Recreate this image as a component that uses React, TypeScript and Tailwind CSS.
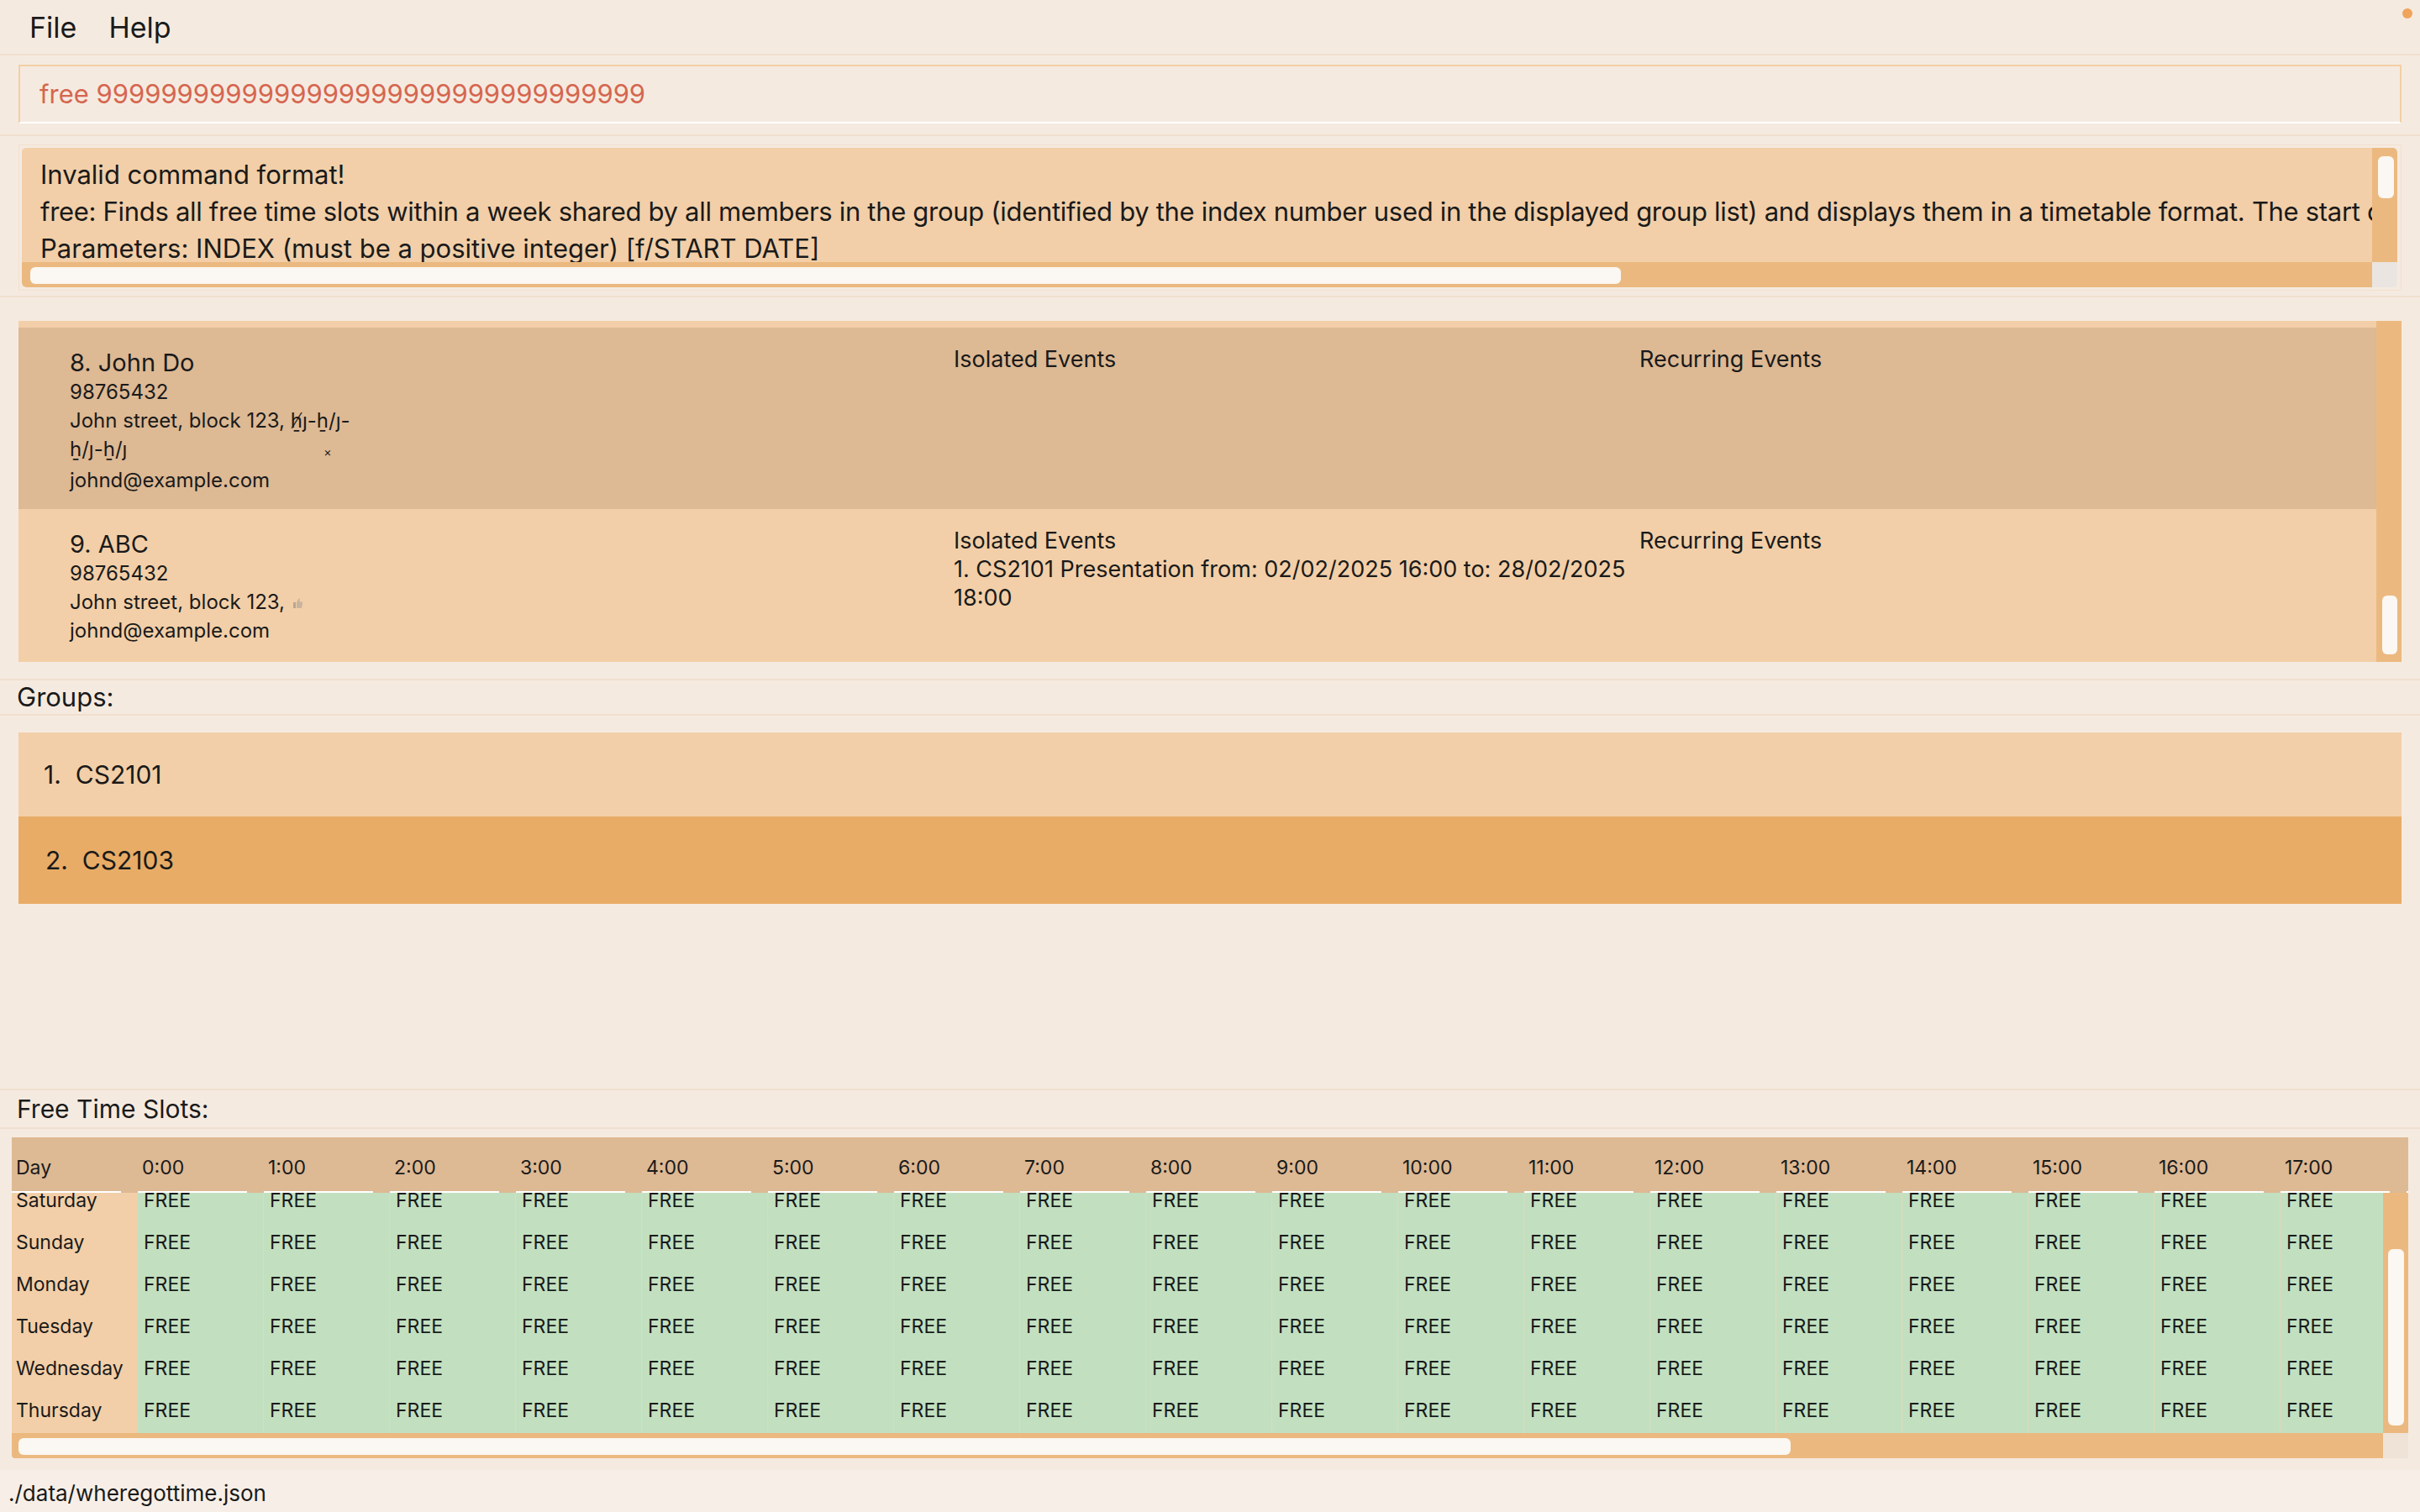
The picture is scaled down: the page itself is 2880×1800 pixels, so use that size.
import React from "react";

const hours = Array.from({ length: 19 }, (_, i) => `${i}:00`);
const days = ["Saturday", "Sunday", "Monday", "Tuesday", "Wednesday", "Thursday", "Friday"];

function Thumb() {
  return (
    <svg width="13" height="14" viewBox="0 0 13 14" className="inline-block align-baseline ml-[2px]">
      <rect x="1" y="6" width="3" height="7" fill="#b9a58f" />
      <path d="M5 6 L7.5 1.5 Q9 1 9 3 L8.5 5.5 L11.5 5.5 Q12.5 6 12 7.5 L11 12.5 Q10.5 13 9.5 13 L5 13 Z" fill="#c8b49e" />
    </svg>
  );
}

export default function App() {
  return (
    <div className="w-[2880px] h-[1800px] overflow-hidden bg-[#F5EAE0] text-[#1a1a1a] flex flex-col font-[family-name:Inter,sans-serif]">
      {/* Menu bar */}
      <div className="h-[64px] shrink-0 relative flex items-center pl-[35px] gap-[38px] text-[34px]">
        <span>File</span>
        <span>Help</span>
        <span className="absolute right-[9px] top-[10px] w-[12px] h-[12px] rounded-full bg-[#F0A45C]" />
      </div>

      {/* Command box */}
      <div className="h-[96px] shrink-0 border-t-[2px] border-[#F0DFCE] px-[22px] pt-[11px]">
        <div className="h-[70px] border-x-2 border-t-2 border-[#F2CFA5] border-b-2 border-b-white flex items-center pl-[23px] text-[31px] text-[#D5664F] whitespace-nowrap">
          free 9999999999999999999999999999999999
        </div>
      </div>

      {/* Result display */}
      <div className="h-[192px] shrink-0 border-t-[2px] border-[#F0DFCE] px-[22px] pt-[10px]">
        <div className="h-[174px] border border-[#F1E0CF] pl-[3px] pr-[4px] py-[3px]">
          <div className="h-full flex flex-col rounded-[5px] overflow-hidden">
            <div className="flex-1 flex min-h-0">
              <div className="flex-1 min-w-0 bg-[#F2CFA8] pl-[22px] pt-[10px] text-[31px] leading-[44px] whitespace-nowrap overflow-hidden">
                <div>Invalid command format!</div>
                <div className="tracking-[-0.01em]">
                  free: Finds all free time slots within a week shared by all members in the group (identified by the index number used in the displayed group list) and displays them in a timetable format. The start date is optional and defaults to today.
                </div>
                <div>Parameters: INDEX (must be a positive integer) [f/START DATE]</div>
                <div>Example: free 1 f/2025-03-01</div>
              </div>
              <div className="w-[30px] shrink-0 bg-[#EBB97F] relative rounded-tr-[5px]">
                <div className="absolute left-[7px] top-[10px] w-[19px] h-[50px] rounded-[6px] bg-[#FBF7F2]" />
              </div>
            </div>
            <div className="h-[30px] shrink-0 flex">
              <div className="flex-1 bg-[#EBB97F] relative rounded-bl-[5px]">
                <div className="absolute left-[10px] top-[6px] w-[1893px] h-[20px] rounded-[6px] bg-[#FBF7F2]" />
              </div>
              <div className="w-[30px] shrink-0 bg-[#EAE5E0]" />
            </div>
          </div>
        </div>
      </div>

      {/* Person list */}
      <div className="h-[456px] shrink-0 border-t-[2px] border-[#F0DFCE] px-[22px] pt-[28px]">
        <div className="h-[406px] flex bg-[#F2CFA8]">
          <div className="flex-1 min-w-0 pt-[8px] overflow-hidden">
            {/* Card 1 */}
            <div className="h-[216px] bg-[#DDB994] flex pl-[61px]">
              <div className="w-[1052px] shrink-0 pt-[24px]">
                <div className="text-[29px] leading-[36px]">8. John Do</div>
                <div className="text-[24px] leading-[34px]">98765432</div>
                <div className="text-[24px] leading-[34px] whitespace-nowrap">John street, block 123, ẖ̸ȷ-ẖ/ȷ-</div>
                <div className="text-[24px] leading-[34px] whitespace-nowrap">
                  ẖ/ȷ-ẖ/ȷ<span className="inline-block ml-[234px] text-[14px]">×</span>
                </div>
                <div className="text-[24px] leading-[34px]">johnd@example.com</div>
              </div>
              <div className="w-[816px] shrink-0 pt-[21px] text-[27px] leading-[34px]">Isolated Events</div>
              <div className="flex-1 pt-[21px] text-[27px] leading-[34px]">Recurring Events</div>
            </div>
            {/* Card 2 */}
            <div className="h-[182px] bg-[#F2CFA8] flex pl-[61px]">
              <div className="w-[1052px] shrink-0 pt-[24px]">
                <div className="text-[29px] leading-[36px]">9. ABC</div>
                <div className="text-[24px] leading-[34px]">98765432</div>
                <div className="text-[24px] leading-[34px] whitespace-nowrap">
                  John street, block 123, <Thumb />
                </div>
                <div className="text-[24px] leading-[34px]">johnd@example.com</div>
              </div>
              <div className="w-[816px] shrink-0 pt-[21px] text-[27px] leading-[34px]">
                <div>Isolated Events</div>
                <div className="whitespace-nowrap">1. CS2101 Presentation from: 02/02/2025 16:00 to: 28/02/2025</div>
                <div>18:00</div>
              </div>
              <div className="flex-1 pt-[21px] text-[27px] leading-[34px]">Recurring Events</div>
            </div>
          </div>
          <div className="w-[30px] shrink-0 bg-[#EBB97F] relative">
            <div className="absolute left-[7px] top-[327px] w-[18px] h-[70px] rounded-[6px] bg-[#FBF7F2]" />
          </div>
        </div>
      </div>

      {/* Groups label */}
      <div className="h-[42px] shrink-0 border-t-[2px] border-[#F0DFCE] flex items-center pl-[20px] text-[31px]">
        Groups:
      </div>

      {/* Groups list */}
      <div className="h-[446px] shrink-0 border-t-[2px] border-[#F0DFCE] px-[22px] pt-[20px]">
        <div className="h-[100px] bg-[#F2CFA8] flex items-center pl-[30px] text-[30px] whitespace-pre">1.  CS2101</div>
        <div className="h-[104px] bg-[#E8AC66] flex items-center pl-[32px] text-[30px] whitespace-pre">2.  CS2103</div>
      </div>

      {/* Free time label */}
      <div className="h-[46px] shrink-0 border-t-[2px] border-[#F0DFCE] flex items-center pl-[20px] text-[30px]">
        Free Time Slots:
      </div>

      {/* Timetable */}
      <div className="h-[408px] shrink-0 border-t-[2px] border-[#F0DFCE] px-[14px] pt-[10px]">
        <div className="w-[2852px] flex flex-col text-[23px]">
          <div className="h-[66px] flex bg-[#DDB994] overflow-hidden">
            {["Day", ...hours].map((h) => (
              <div key={h} className="w-[150px] shrink-0 relative flex items-center pt-[6px] pl-[5px]">
                {h}
                <div className="absolute left-0 bottom-0 w-[130px] h-[2px] bg-white" />
              </div>
            ))}
          </div>
          <div className="h-[286px] flex">
            <div className="w-[2822px] shrink-0 overflow-hidden">
              <div className="mt-[-16px]">
                {days.map((d) => (
                  <div key={d} className="h-[50px] flex">
                    <div className="w-[150px] shrink-0 bg-[#F2CFA8] flex items-center pl-[5px]">{d}</div>
                    {hours.map((h) => (
                      <div key={h} className="w-[150px] shrink-0 bg-[#C2E0C0] border-r border-[#E3D8B6] flex items-center pl-[7px]">
                        FREE
                      </div>
                    ))}
                  </div>
                ))}
              </div>
            </div>
            <div className="w-[30px] shrink-0 bg-[#EBB97F] relative">
              <div className="absolute left-[6px] top-[67px] w-[19px] h-[210px] rounded-[6px] bg-[#FBF7F2]" />
            </div>
          </div>
          <div className="h-[30px] flex">
            <div className="w-[2822px] shrink-0 bg-[#EBB97F] relative rounded-bl-[4px]">
              <div className="absolute left-[8px] top-[6px] w-[2109px] h-[20px] rounded-[6px] bg-[#FBF7F2]" />
            </div>
            <div className="w-[30px] shrink-0 bg-[#EFE3D7]" />
          </div>
        </div>
      </div>

      {/* Status bar */}
      <div className="h-[50px] shrink-0 bg-[#F7EFE7] flex items-center pl-[10px] pt-[4px] text-[26px]">
        ./data/wheregottime.json
      </div>
    </div>
  );
}
